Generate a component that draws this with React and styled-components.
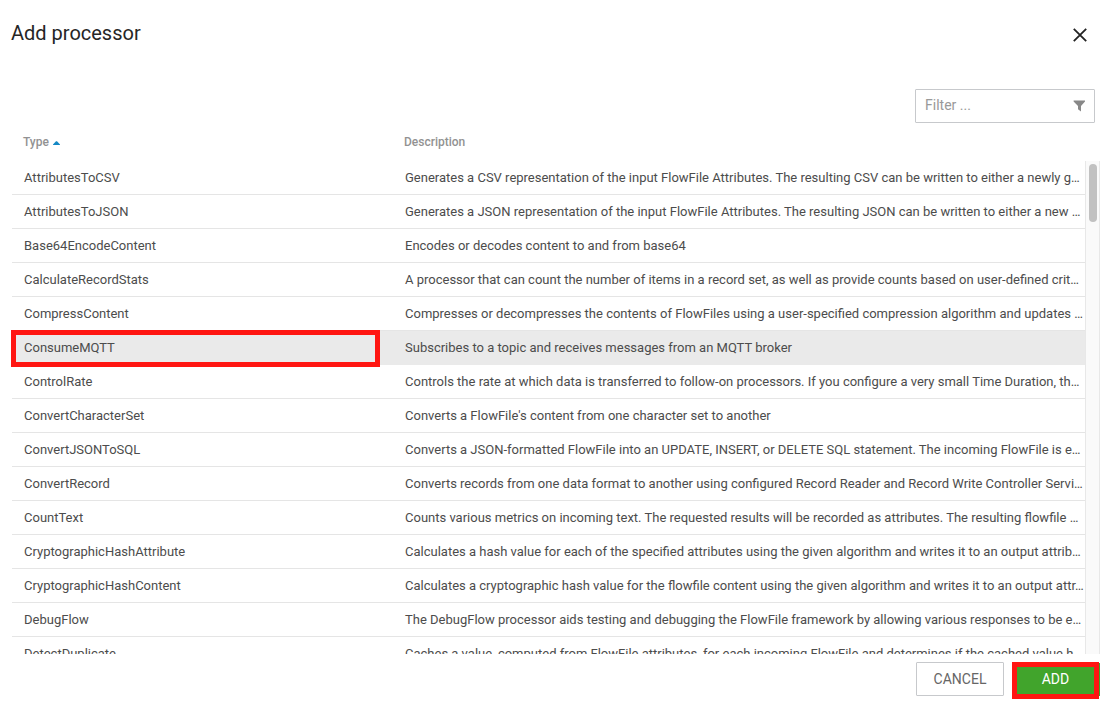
import React from "react";
import styled, { createGlobalStyle } from "styled-components";

const Global = createGlobalStyle`
  * { box-sizing: border-box; }
  body { margin: 0; background: #fff; font-family: Roboto, sans-serif; color: #262626; overflow: hidden; }
  button, input { font-family: inherit; }
`;
const Dialog = styled.main`
  width: 1114px; height: 709px; padding: 0 14px 10px 11px;
  display: flex; flex-direction: column;
`;
const Header = styled.header`
  height: 89px; padding: 21px 12px 0 0; display: flex; justify-content: space-between; align-items: flex-start;
  flex: none;
`;
const Title = styled.h1`
  margin: 0; font-size: 20px; line-height: 24px; font-weight: 400;
`;
const Close = styled.svg`
  width: 16px; height: 16px; margin-top: 6px;
`;
const FilterBox = styled.div`
  width: 180px; height: 34px; margin: 0 5px 0 auto; padding: 0 9px 2px; border: 1px solid #c7c9cc; border-radius: 1px;
  display: flex; justify-content: space-between; align-items: center;
  font-size: 14px; color: #999; flex: none;
`;
const FunnelIcon = styled.svg`
  width: 12px; height: 12px; margin-top: 2px;
`;
const HeadRow = styled.div`
  display: grid; grid-template-columns: 381px 1fr; height: 38px; padding-left: 12px; flex: none;
  font-size: 12px; line-height: 38px; font-weight: 500; color: #929292;
`;
const HeadCell = styled.div`
  display: flex; align-items: center; gap: 4px;
`;
const SortArrow = styled.svg`
  width: 7px; height: 4px; margin-top: 2px;
`;
const Viewport = styled.div`
  height: 493px; display: flex; overflow: hidden; flex: none;
`;
const Rows = styled.div`
  width: 1073px; margin-left: 1px;
`;
const Row = styled.div`
  height: 34px; display: grid; grid-template-columns: 368px 1fr;
  border-bottom: 1px solid ${(p) => (p.$selected ? "#eaeaea" : "#e5e5e5")};
  background: ${(p) => (p.$selected ? "#eaeaea" : "#fff")};
`;
const Cell = styled.div`
  padding: 0 0 0 12px; font-size: 13px; line-height: 33px; white-space: nowrap; color: #4c4c4c;
`;
const Description = styled(Cell)`
  padding: 0 0 0 25px;
`;
const NameMark = styled(Cell)`
  height: 37px; margin: -1px 0 0 -1px; padding-left: 8px; line-height: 25px; border: 5px solid #ff1612; position: relative;
`;
const Scrollbar = styled.div`
  width: 15px; border-left: 1px solid #e8e8e8; border-right: 1px solid #e8e8e8; background: #fafafa; padding: 3px;
`;
const Thumb = styled.div`
  height: 58px; width: 8px; border-radius: 4px; background: #c1c1c1;
`;
const Footer = styled.footer`
  display: flex; justify-content: flex-end; align-items: flex-start; padding-top: 8px; gap: 8px;
`;
const Button = styled.button`
  width: 88px; height: 34px; padding: 0; border: 1px solid #c7c9cc; border-radius: 1px;
  background: #fff; color: #666; font-size: 14px;
`;
const AddFrame = styled.div`
  width: 88px; height: 37px; display: flex; padding-right: 1px;
  background: linear-gradient(#41a42c, #41a42c) right 1px / 1px 33px no-repeat;
`;
const AddButton = styled(Button)`
  width: 87px; height: 37px; padding: 0 0 3px; border: 5px solid #ff1612; border-radius: 0;
  background: #41a42c; color: #fff;
`;

const items = [
  ["AttributesToCSV", "Generates a CSV representation of the input FlowFile Attributes. The resulting CSV can be written to either a newly g…"],
  ["AttributesToJSON", "Generates a JSON representation of the input FlowFile Attributes. The resulting JSON can be written to either a new …"],
  ["Base64EncodeContent", "Encodes or decodes content to and from base64"],
  ["CalculateRecordStats", "A processor that can count the number of items in a record set, as well as provide counts based on user-defined crit…"],
  ["CompressContent", "Compresses or decompresses the contents of FlowFiles using a user-specified compression algorithm and updates …"],
  ["ConsumeMQTT", "Subscribes to a topic and receives messages from an MQTT broker"],
  ["ControlRate", "Controls the rate at which data is transferred to follow-on processors. If you configure a very small Time Duration, th…"],
  ["ConvertCharacterSet", "Converts a FlowFile's content from one character set to another"],
  ["ConvertJSONToSQL", "Converts a JSON-formatted FlowFile into an UPDATE, INSERT, or DELETE SQL statement. The incoming FlowFile is e…"],
  ["ConvertRecord", "Converts records from one data format to another using configured Record Reader and Record Write Controller Servi…"],
  ["CountText", "Counts various metrics on incoming text. The requested results will be recorded as attributes. The resulting flowfile …"],
  ["CryptographicHashAttribute", "Calculates a hash value for each of the specified attributes using the given algorithm and writes it to an output attrib…"],
  ["CryptographicHashContent", "Calculates a cryptographic hash value for the flowfile content using the given algorithm and writes it to an output attr…"],
  ["DebugFlow", "The DebugFlow processor aids testing and debugging the FlowFile framework by allowing various responses to be e…"],
  ["DetectDuplicate", "Caches a value, computed from FlowFile attributes, for each incoming FlowFile and determines if the cached value h…"],
];

export default function App() {
  return (
    <Dialog>
      <Global />
      <Header>
        <Title>Add processor</Title>
        <Close viewBox="0 0 16 16"><path d="M1.8 1.8L14.2 14.2M14.2 1.8L1.8 14.2" stroke="#222" strokeWidth="1.8" /></Close>
      </Header>
      <FilterBox>
        <span>Filter ...</span>
        <FunnelIcon viewBox="0 0 12 12"><path d="M0.6 0.5H12V1.6L8 6V11.6L5 9.3V6L0.6 1.6Z" fill="#888" /></FunnelIcon>
      </FilterBox>
      <HeadRow>
        <HeadCell>Type <SortArrow viewBox="0 0 7 4"><path d="M0 4V3.4L3 0.2H4L7 3.4V4Z" fill="#1488c4" /></SortArrow></HeadCell>
        <HeadCell>Description</HeadCell>
      </HeadRow>
      <Viewport>
        <Rows>
          {items.map(([name, text]) => {
            const selected = name === "ConsumeMQTT";
            const Name = selected ? NameMark : Cell;
            return (
              <Row key={name} $selected={selected}>
                <Name>{name}</Name>
                <Description>{text}</Description>
              </Row>
            );
          })}
        </Rows>
        <Scrollbar><Thumb /></Scrollbar>
      </Viewport>
      <Footer>
        <Button>CANCEL</Button>
        <AddFrame><AddButton>ADD</AddButton></AddFrame>
      </Footer>
    </Dialog>
  );
}
